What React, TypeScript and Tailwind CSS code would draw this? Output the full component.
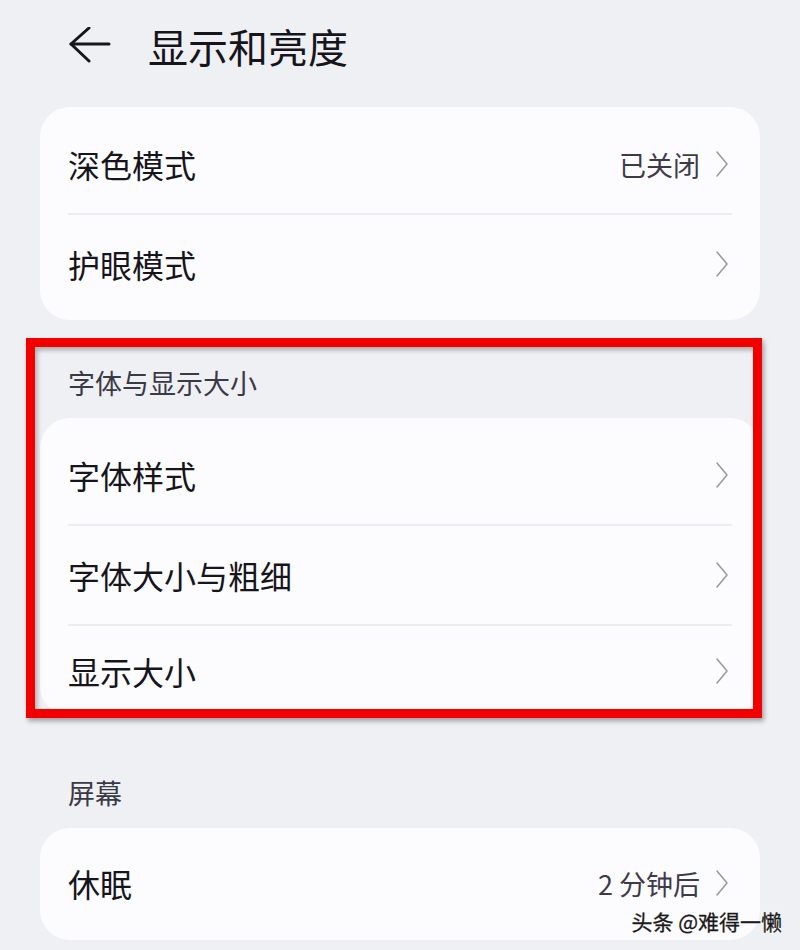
type Row = {
  label: string;
  value?: string;
  h?: string;
};

const FONT = { fontFamily: '"Noto Sans CJK SC", "Noto Sans", sans-serif' };

function BackArrow() {
  return (
    <svg width="42" height="38" viewBox="0 0 42 38" fill="none" stroke="#16161c" strokeWidth="3" strokeLinecap="round" strokeLinejoin="round">
      <path d="M2 17 H40" />
      <path d="M20 1 L2 17 L20 34" />
    </svg>
  );
}

function Chevron() {
  return (
    <svg width="14" height="28" viewBox="0 0 14 28" fill="none" stroke="#9b9ba3" strokeWidth="1.6" strokeLinecap="round" strokeLinejoin="round">
      <path d="M2 2 L12 14 L2 26" />
    </svg>
  );
}

function SettingRow({ label, value, h = "h-[98px]" }: Row) {
  return (
    <div className={`flex items-center ${h} pl-[28px] pr-[31px]`}>
      <span className="text-[32px] leading-none text-[#16151c]">{label}</span>
      <div className="ml-auto flex items-center gap-[15px]">
        {value && <span className="text-[27px] leading-none text-[#3d3a4a]">{value}</span>}
        <Chevron />
      </div>
    </div>
  );
}

function Divider() {
  return <div className="mx-[28px] h-[2px] bg-[#ececf1]" />;
}

function Card({ rows, className = "" }: { rows: Row[]; className?: string }) {
  return (
    <div className={`rounded-[30px] bg-[#fcfcfe] ${className}`}>
      {rows.map((r, i) => (
        <div key={r.label}>
          {i > 0 && <Divider />}
          <SettingRow {...r} />
        </div>
      ))}
    </div>
  );
}

function SectionTitle({ children, className = "" }: { children: string; className?: string }) {
  return (
    <div className={`flex items-center pl-[28px] ${className}`}>
      <span className="text-[27px] leading-none text-[#3a3946]">{children}</span>
    </div>
  );
}

export default function App() {
  return (
    <div className="relative h-[950px] w-[800px] overflow-hidden bg-[#eff0f4]" style={FONT}>
      {/* header */}
      <div className="flex h-[95px] items-center pl-[69px] pb-[4px]">
        <BackArrow />
        <h1 className="ml-[37px] text-[40px] font-normal leading-none text-[#16151c]">显示和亮度</h1>
      </div>

      <div className="flex flex-col px-[40px] pt-[12px]">
        <Card
          className="pt-[8px] pb-[7px]"
          rows={[
            { label: "深色模式", value: "已关闭" },
            { label: "护眼模式" },
          ]}
        />

        <SectionTitle className="h-[98px] pt-[26px]">字体与显示大小</SectionTitle>

        <Card
          className="pt-[8px]"
          rows={[
            { label: "字体样式" },
            { label: "字体大小与粗细" },
            { label: "显示大小", h: "h-[90px]" },
          ]}
        />

        <SectionTitle className="h-[112px] pt-[40px]">屏幕</SectionTitle>

        <Card className="pt-[6px] pb-[8px]" rows={[{ label: "休眠", value: "2 分钟后" }]} />
      </div>

      {/* highlight frame drawn over the font section */}
      <div className="pointer-events-none absolute left-[26px] top-[338px] h-[380px] w-[736px] border-[9px] border-[#f20000] shadow-[2px_3px_5px_rgba(0,0,0,0.35),inset_2px_3px_5px_rgba(0,0,0,0.3)]" />

      <div
        className="absolute right-[18px] top-[911px] text-[21px] leading-none text-[#1a1a1a] [-webkit-text-stroke:0.3px_#1a1a1a]"
        style={{ textShadow: "0 0 2px #fff, 0 0 2px #fff, 0 0 3px #fff" }}
      >
        头条 @难得一懒
      </div>
    </div>
  );
}
